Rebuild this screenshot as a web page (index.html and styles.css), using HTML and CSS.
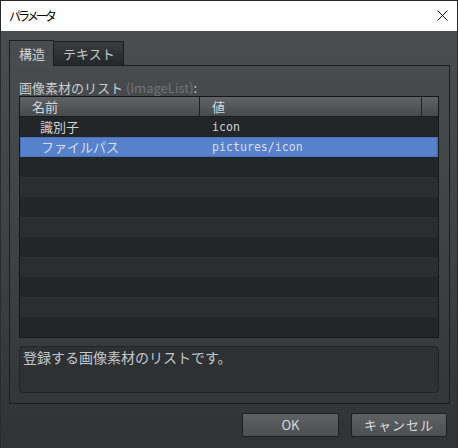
FILE: index.html
```html
<!DOCTYPE html>
<html lang="ja">
<head>
<meta charset="utf-8">
<link rel="stylesheet" href="styles.css">
</head>
<body>
<div class="window">
  <div class="titlebar">
    <span class="title">パラメータ</span>
    <span class="close"><svg width="11" height="11" viewBox="0 0 11 11"><path d="M0.5 0.5L10.5 10.5M10.5 0.5L0.5 10.5" stroke="#111" stroke-width="1"/></svg></span>
  </div>
  <div class="content">
    <div class="tabs">
      <div class="tab active">構造</div>
      <div class="tab">テキスト</div>
    </div>
    <div class="panel">
      <div class="label">画像素材のリスト <span class="muted">(ImageList)</span>:</div>
      <div class="table">
        <div class="thead">
          <div class="th">名前</div>
          <div class="th">値</div>
          <div class="th"></div>
        </div>
        <div class="row"><div class="c1">識別子</div><div class="c2">icon</div></div>
        <div class="row sel"><div class="c1">ファイルパス</div><div class="c2">pictures/icon</div></div>
        <div class="row"></div>
        <div class="row"></div>
        <div class="row"></div>
        <div class="row"></div>
        <div class="row"></div>
        <div class="row"></div>
        <div class="row"></div>
        <div class="row"></div>
        <div class="row"></div>
      </div>
      <div class="desc">登録する画像素材のリストです。</div>
    </div>
    <div class="buttons">
      <button class="btn">OK</button>
      <button class="btn">キャンセル</button>
    </div>
  </div>
</div>
</body>
</html>
```

FILE: styles.css
```css
html, body {
  margin: 0;
  padding: 0;
  background: #2f3235;
}
.window {
  width: 458px;
  height: 448px;
  box-sizing: border-box;
  border: 1px solid #2a2b2d;
  border-bottom: none;
  overflow: hidden;
  display: flex;
  flex-direction: column;
  font-family: "Noto Sans CJK JP", "Noto Sans", sans-serif;
  font-size: 13px;
  color: #c9cdd1;
}
.titlebar {
  height: 30px;
  flex: none;
  background: #ffffff;
  display: flex;
  align-items: center;
  justify-content: space-between;
  padding: 0 9px 0 8px;
}
.title {
  font-size: 12px;
  letter-spacing: -3px;
  color: #000;
  line-height: 30px;
}
.close {
  display: flex;
  margin-top: -1px;
}
.content {
  flex: 1;
  padding: 9px 7px 0 8px;
  background: linear-gradient(#4a4d50 0%, #3e4144 55%, #303336 100%);
  display: flex;
  flex-direction: column;
}
.tabs {
  display: flex;
  align-items: flex-end;
  height: 25px;
}
.tab {
  box-sizing: border-box;
  height: 24px;
  border: 1px solid #1b1d20;
  border-bottom: none;
  line-height: 23px;
  padding: 0 8px 0 9px;
  background: linear-gradient(#3a3d40, #24272a);
  color: #c4c8cc;
  margin-left: -1px;
}
.tab.active {
  height: 26px;
  margin-bottom: -1px;
  margin-left: 0;
  background: #494c4f;
  line-height: 25px;
  position: relative;
  z-index: 1;
  color: #cfd3d7;
}
.panel {
  border: 1px solid #1b1d20;
  padding: 13px 10px 10px 9px;
  display: flex;
  flex-direction: column;
}
.label {
  height: 17px;
  line-height: 17px;
  color: #c9cdd1;
}
.muted {
  color: #6f7378;
}
.table {
  width: 420px;
  box-sizing: border-box;
  border: 1px solid #15171a;
  display: flex;
  flex-direction: column;
}
.thead {
  display: grid;
  grid-template-columns: 180px 222px 16px;
  height: 20px;
  box-sizing: border-box;
  border-bottom: 1px solid #1a1c1f;
  background: linear-gradient(#606366, #474a4d);
}
.th {
  box-sizing: border-box;
  border-right: 1px solid #1e2124;
  padding-left: 12px;
  line-height: 19px;
  color: #d3d7db;
}
.th:last-child {
  border-right: none;
}
.row {
  height: 20px;
  display: grid;
  grid-template-columns: 180px 1fr;
  background: #2b2e31;
  box-sizing: border-box;
}
.row:nth-child(even) {
  background: #232629;
}
.row.sel {
  background: #5781cb;
  border: 1px solid #4a72ba;
  border-right-width: 2px;
}
.c1 {
  padding-left: 20px;
  line-height: 20px;
  color: #d0d4d8;
}
.c2 {
  padding-left: 12px;
  line-height: 20px;
  font-family: "DejaVu Sans Mono", monospace;
  font-size: 11.6px;
  color: #d0d4d8;
}
.row.sel .c1, .row.sel .c2 {
  line-height: 18px;
  color: #d6dff0;
}
.row.sel .c1 {
  padding-left: 20px;
}
.row.sel .c2 {
  padding-left: 11px;
}
.desc {
  margin-top: 8px;
  width: 420px;
  height: 47px;
  box-sizing: border-box;
  border: 1px solid #222528;
  border-radius: 4px;
  background: #2e3134;
  padding: 1px 3px;
  font-size: 14px;
  line-height: 19px;
  color: #c4c8cc;
}
.buttons {
  margin-top: 9px;
  padding-right: 3px;
  display: flex;
  justify-content: flex-end;
  gap: 12px;
}
.btn {
  width: 97px;
  height: 24px;
  box-sizing: border-box;
  border: 1px solid #1c1e21;
  border-radius: 2px;
  background: linear-gradient(#5f6265, #4c4f52);
  color: #d6dadd;
  font-family: "Noto Sans CJK JP", "Noto Sans", sans-serif;
  font-size: 13px;
  line-height: 20px;
  padding: 0;
}
.btn + .btn {
  width: 96px;
  letter-spacing: 1px;
}
```
